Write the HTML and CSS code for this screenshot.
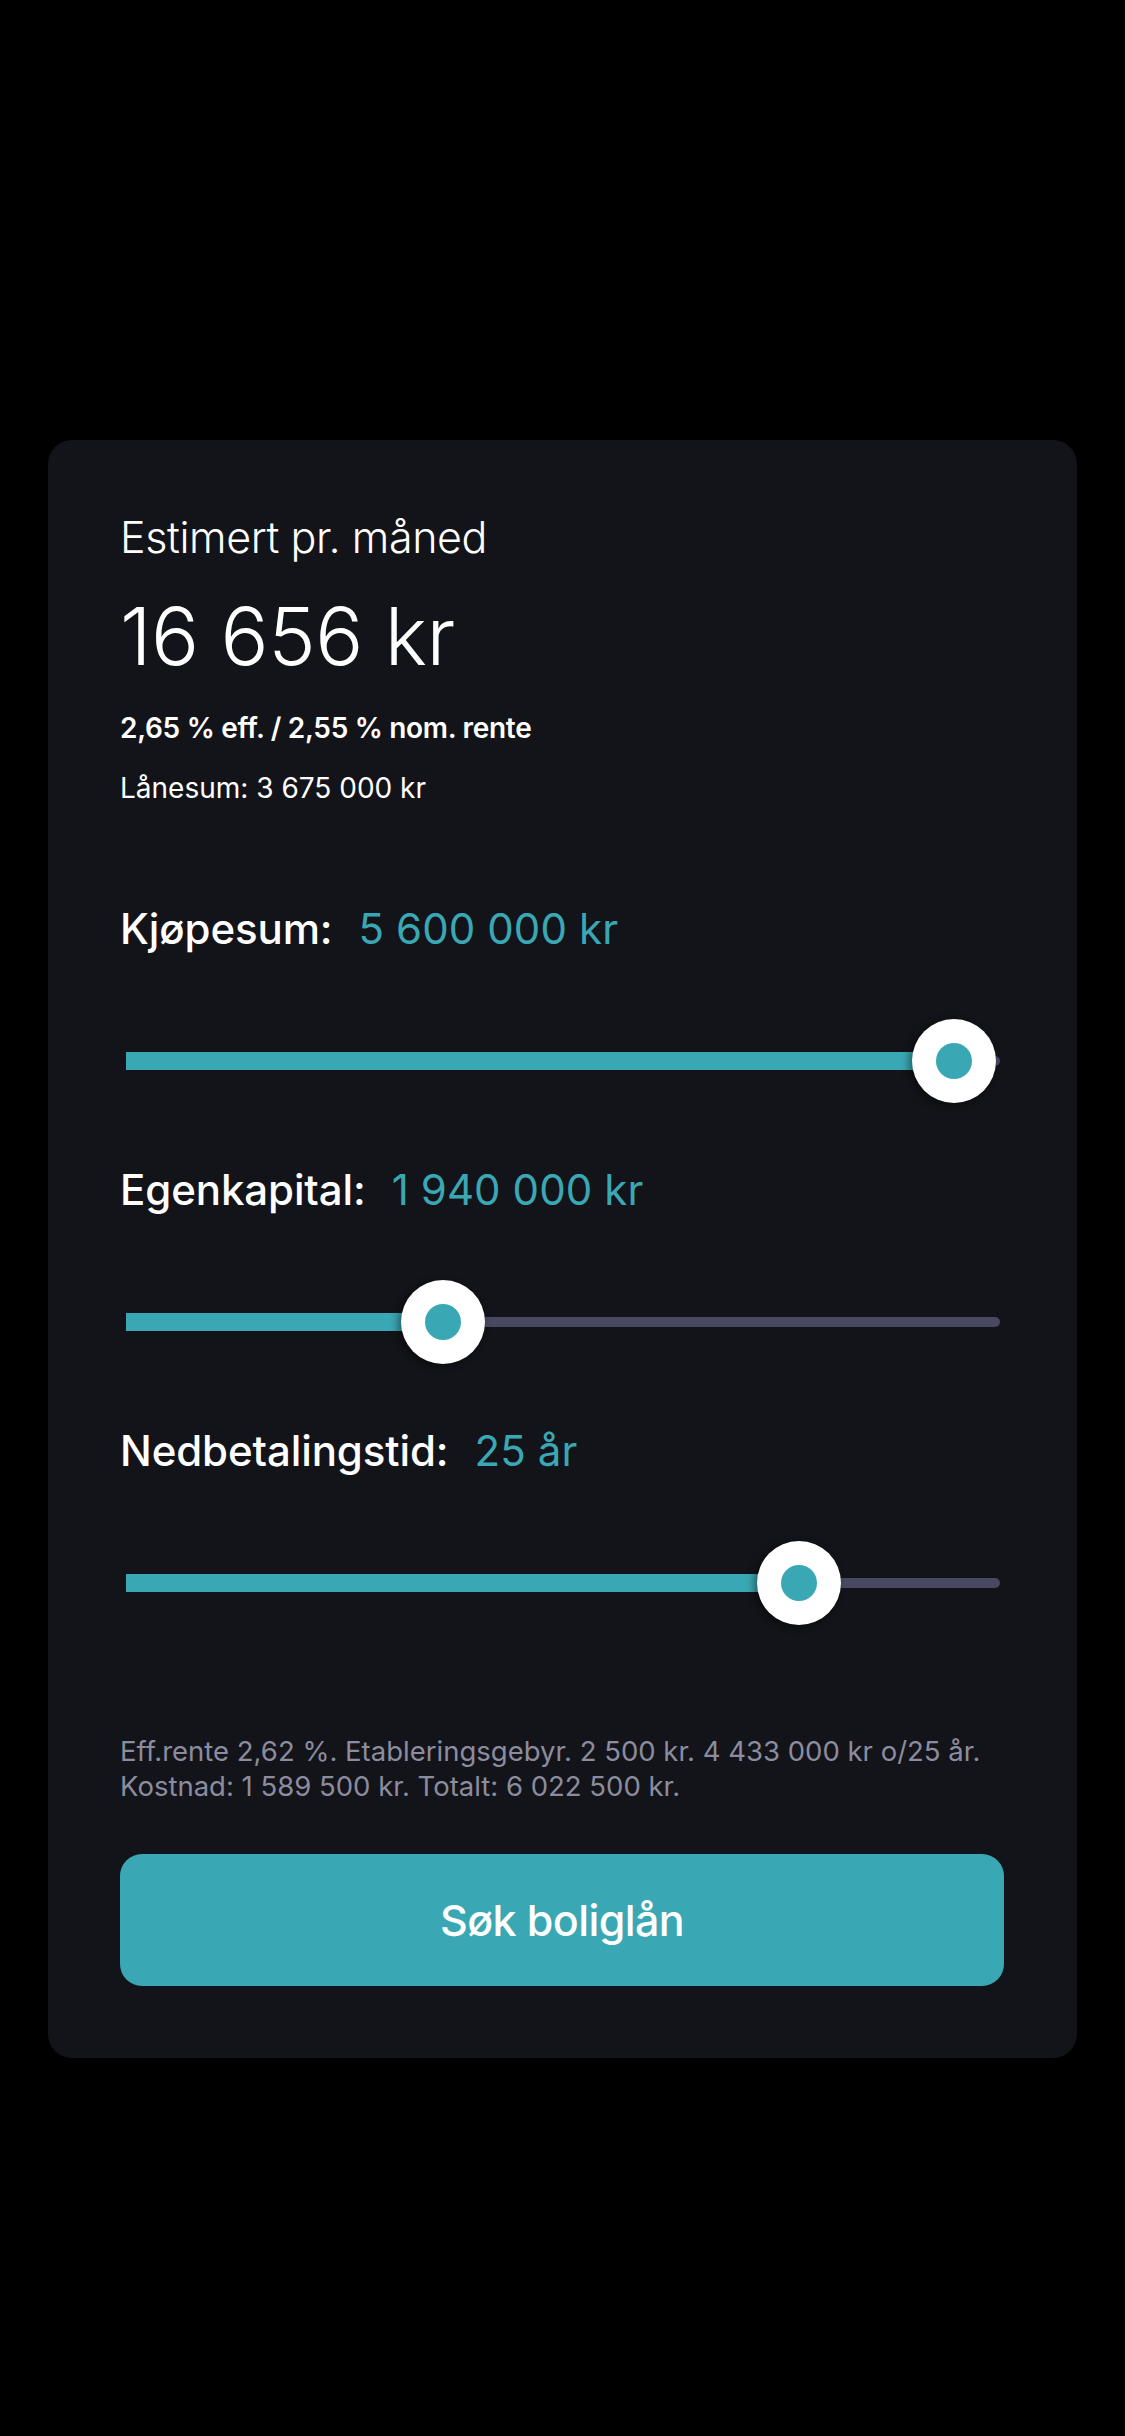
FILE: index.html
```html
<!DOCTYPE html>
<html lang="no">
<head>
<meta charset="utf-8">
<title>Boliglånskalkulator</title>
<link rel="stylesheet" href="styles.css">
</head>
<body>
<main class="card">
  <p class="est-label">Estimert pr. måned</p>
  <p class="est-amount">16 656 kr</p>
  <p class="rate">2,65 % eff. / 2,55 % nom. rente</p>
  <p class="loan">Lånesum: 3 675 000 kr</p>

  <section class="field">
    <h2 class="field-label">Kjøpesum:<span class="field-value">5 600 000 kr</span></h2>
    <div class="slider">
      <div class="track"></div>
      <div class="fill" style="width: 94.7%"></div>
      <div class="thumb" style="left: 94.7%"><span class="dot"></span></div>
    </div>
  </section>

  <section class="field">
    <h2 class="field-label">Egenkapital:<span class="field-value">1 940 000 kr</span></h2>
    <div class="slider">
      <div class="track"></div>
      <div class="fill" style="width: 36.3%"></div>
      <div class="thumb" style="left: 36.3%"><span class="dot"></span></div>
    </div>
  </section>

  <section class="field">
    <h2 class="field-label">Nedbetalingstid:<span class="field-value">25 år</span></h2>
    <div class="slider">
      <div class="track"></div>
      <div class="fill" style="width: 77%"></div>
      <div class="thumb" style="left: 77%"><span class="dot"></span></div>
    </div>
  </section>

  <p class="terms">Eff.rente 2,62 %. Etableringsgebyr. 2 500 kr. 4 433 000 kr o/25 år. Kostnad: 1 589 500 kr. Totalt: 6 022 500 kr.</p>

  <button class="cta" type="button">Søk boliglån</button>
</main>
</body>
</html>
```

FILE: styles.css
```css
* { box-sizing: border-box; }

html, body {
  margin: 0;
  padding: 0;
  background: #000;
}

body {
  font-family: Inter, "Noto Sans", "Liberation Sans", sans-serif;
  color: #fff;
  padding-top: 440px;
}

.card {
  margin: 0 48px;
  background: #131419;
  border-radius: 24px;
  padding: 71px 73px 72px 72px;
  display: flex;
  flex-direction: column;
}

.card p, .card h2 { margin: 0; }

.est-label {
  font-size: 43px;
  font-weight: 300;
  line-height: 52px;
  letter-spacing: -0.4px;
}

.est-amount {
  margin-top: 28px !important;
  font-size: 80px;
  font-weight: 300;
  line-height: 90px;
  letter-spacing: -0.5px;
}

.rate {
  margin-top: 29px !important;
  font-size: 28px;
  font-weight: 600;
  line-height: 36px;
  letter-spacing: -0.3px;
}

.loan {
  margin-top: 24px !important;
  font-size: 28px;
  font-weight: 400;
  line-height: 36px;
  letter-spacing: 0;
}

.field {
  display: flex;
  flex-direction: column;
  margin-bottom: 62px;
}

.field:first-of-type { margin-top: 98px; }

.field-label {
  font-size: 42px;
  font-weight: 500;
  line-height: 50px;
  letter-spacing: -0.1px;
}

.field-value {
  color: #3aa8b4;
  font-weight: 400;
  margin-left: 26px;
  letter-spacing: 0.1px;
}

.slider {
  position: relative;
  height: 84px;
  margin: 65px 4px 0 6px;
}

.track {
  position: absolute;
  left: 0;
  right: 0;
  top: 37px;
  height: 10px;
  border-radius: 5px;
  background: #484860;
}

.fill {
  position: absolute;
  left: 0;
  top: 33px;
  height: 18px;
  background: #3aa8b4;
}

.thumb {
  position: absolute;
  top: 0;
  width: 84px;
  height: 84px;
  margin-left: -42px;
  border-radius: 50%;
  background: #fff;
  box-shadow: -3px 2px 8px rgba(0, 0, 0, 0.45);
  display: flex;
  align-items: center;
  justify-content: center;
}

.dot {
  width: 36px;
  height: 36px;
  border-radius: 50%;
  background: #3aa8b4;
}

.terms {
  margin-top: 47px !important;
  font-size: 27.5px;
  font-weight: 400;
  line-height: 35px;
  color: #8b8c9f;
  letter-spacing: 0;
}

.cta {
  margin-top: 50px;
  height: 132px;
  border: 0;
  border-radius: 22px;
  background: #3aa8b4;
  color: #fff;
  font-family: inherit;
  font-size: 43px;
  font-weight: 500;
  letter-spacing: -0.6px;
  cursor: pointer;
}
```
